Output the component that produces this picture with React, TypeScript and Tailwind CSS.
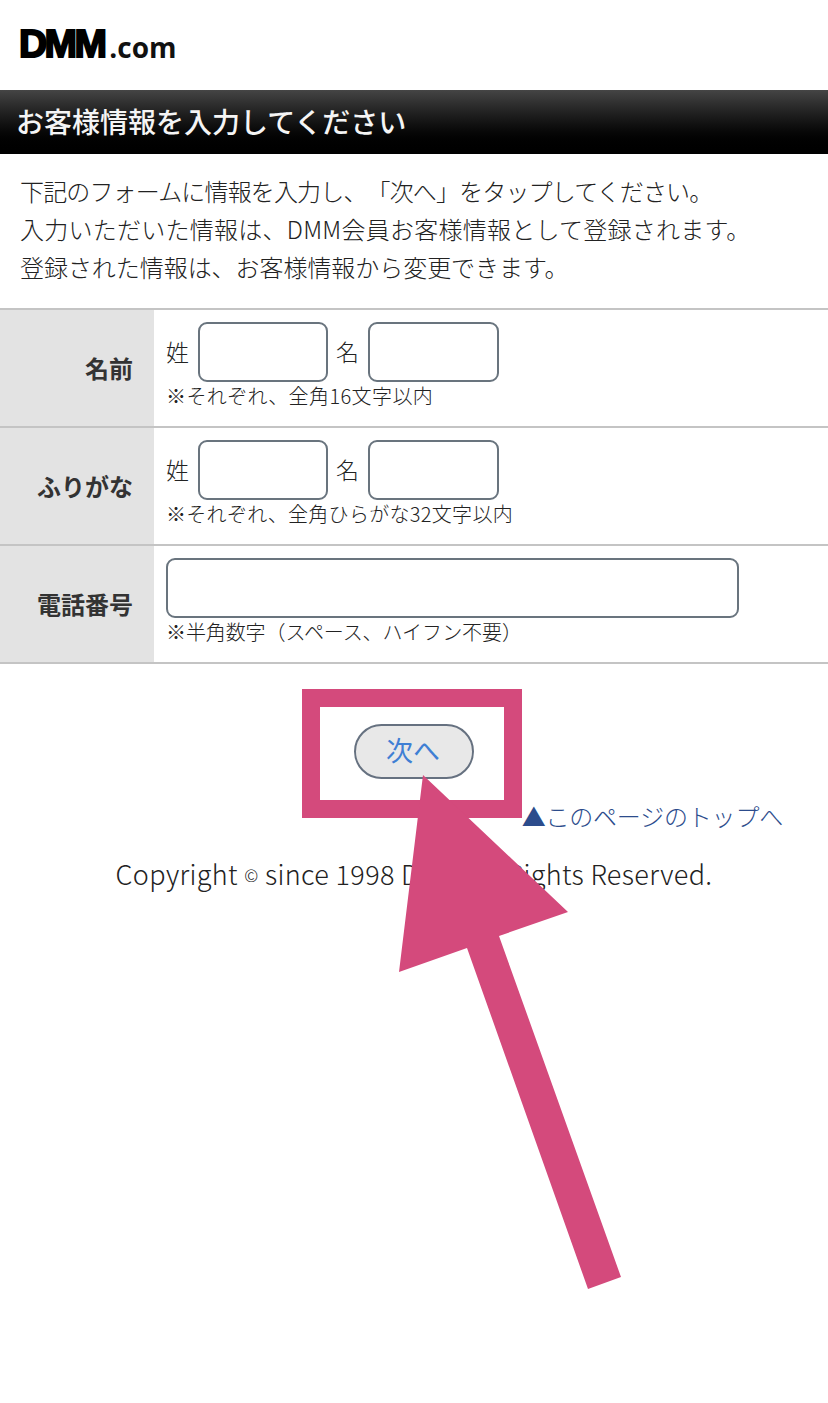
const font = { fontFamily: '"Noto Sans CJK JP", "Noto Sans", sans-serif' };

function Box({ w }: { w: string }) {
  return <div className={`h-[60px] rounded-[9px] border-2 border-[#69747e] bg-white ${w}`} />;
}

function NamePair() {
  return (
    <div className="flex items-center h-[60px]">
      <span className="w-[32px] pb-[2px] text-[23px] leading-none font-light text-[#222]">姓</span>
      <div className="h-[60px] w-[130px] rounded-[9px] border-2 border-[#69747e] bg-white" />
      <span className="w-[40px] pb-[2px] pl-[8px] text-[23px] leading-none font-light text-[#222]">名</span>
      <div className="h-[60px] w-[131px] rounded-[9px] border-2 border-[#69747e] bg-white" />
    </div>
  );
}

function Row({ label, note, noteClass, children }: { label: string; note: string; noteClass: string; children: React.ReactNode }) {
  return (
    <div className="flex h-[118px] border-b-2 border-[#c4c4c4]">
      <div className="flex w-[154px] items-center justify-end bg-[#e3e3e3] pr-[21px] pb-[1px] text-[24px] font-bold text-[#333]">
        {label}
      </div>
      <div className="flex-1 pl-[12px] pt-[12px]">
        {children}
        <div className={`text-[20px] leading-[28px] font-light text-[#222] ${noteClass}`}>{note}</div>
      </div>
    </div>
  );
}

export default function App() {
  return (
    <div className="relative h-[1403px] w-[828px] overflow-hidden bg-white" style={font}>
      <div className="flex h-[90px] items-end pb-[31px] pl-[19px]">
        <span
          className="text-[39px] leading-[30px] font-black tracking-[-2.6px] text-black"
          style={{ fontFamily: '"Liberation Sans", sans-serif', WebkitTextStroke: '2px #000' }}
        >
          DMM
        </span>
        <span
          className="ml-[5px] text-[28px] leading-[24px] font-bold text-[#111]"
          style={{ fontFamily: '"Open Sans", sans-serif' }}
        >
          .com
        </span>
      </div>

      <div className="flex h-[64px] items-center bg-gradient-to-b from-[#454545] via-[#141414] to-black pb-[2px] pl-[16px] text-[28px] font-medium text-[#f5f5f5]">
        お客様情報を入力してください
      </div>

      <div className="px-[20px] pt-[18px] pb-[22px] text-[24px] leading-[38px] font-light text-[#222] [text-spacing-trim:space-all]">
        <p className="tracking-[-0.85px]">下記のフォームに情報を入力し、「次へ」をタップしてください。</p>
        <p className="tracking-[0.25px]">入力いただいた情報は、DMM会員お客様情報として登録されます。</p>
        <p className="tracking-[-0.05px]">登録された情報は、お客様情報から変更できます。</p>
      </div>

      <div className="border-t-2 border-[#c4c4c4]">
        <Row label="名前" note="※それぞれ、全角16文字以内" noteClass="tracking-[0.4px]">
          <NamePair />
        </Row>
        <Row label="ふりがな" note="※それぞれ、全角ひらがな32文字以内" noteClass="tracking-[0.3px]">
          <NamePair />
        </Row>
        <Row label="電話番号" note="※半角数字（スペース、ハイフン不要）" noteClass="tracking-[-0.1px]">
          <Box w="w-[573px]" />
        </Row>
      </div>

      <div className="flex justify-center pt-[60px]">
        <button className="flex h-[55px] w-[120px] items-center justify-center rounded-full border-2 border-[#667180] bg-[#e8e8e8] pb-[2px] pr-[2px] text-[27px] text-[#3f7fd4]">
          次へ
        </button>
      </div>

      <div className="flex justify-end pr-[45px] pt-[20px] text-[24px] leading-[34px] font-light text-[#2c4c8c]">
        <span className="tracking-[-0.2px]">▲このページのトップへ</span>
      </div>

      <div className="pt-[24px] text-center text-[27px] leading-[34px] font-light tracking-[0.35px] text-[#222]">
        Copyright <span className="text-[17px] align-[3px]">©</span> since 1998 DMM All Rights Reserved.
      </div>

      <div className="absolute left-[302px] top-[689px] h-[129px] w-[220px] border-[18px] border-[#d44a7c]" />
      <svg className="absolute left-0 top-0" width="828" height="1403" viewBox="0 0 828 1403">
        <polygon
          fill="#d44a7c"
          points="423,775 568,912 499,936 621,1277 588,1289 467,948 399,972"
        />
      </svg>
    </div>
  );
}
